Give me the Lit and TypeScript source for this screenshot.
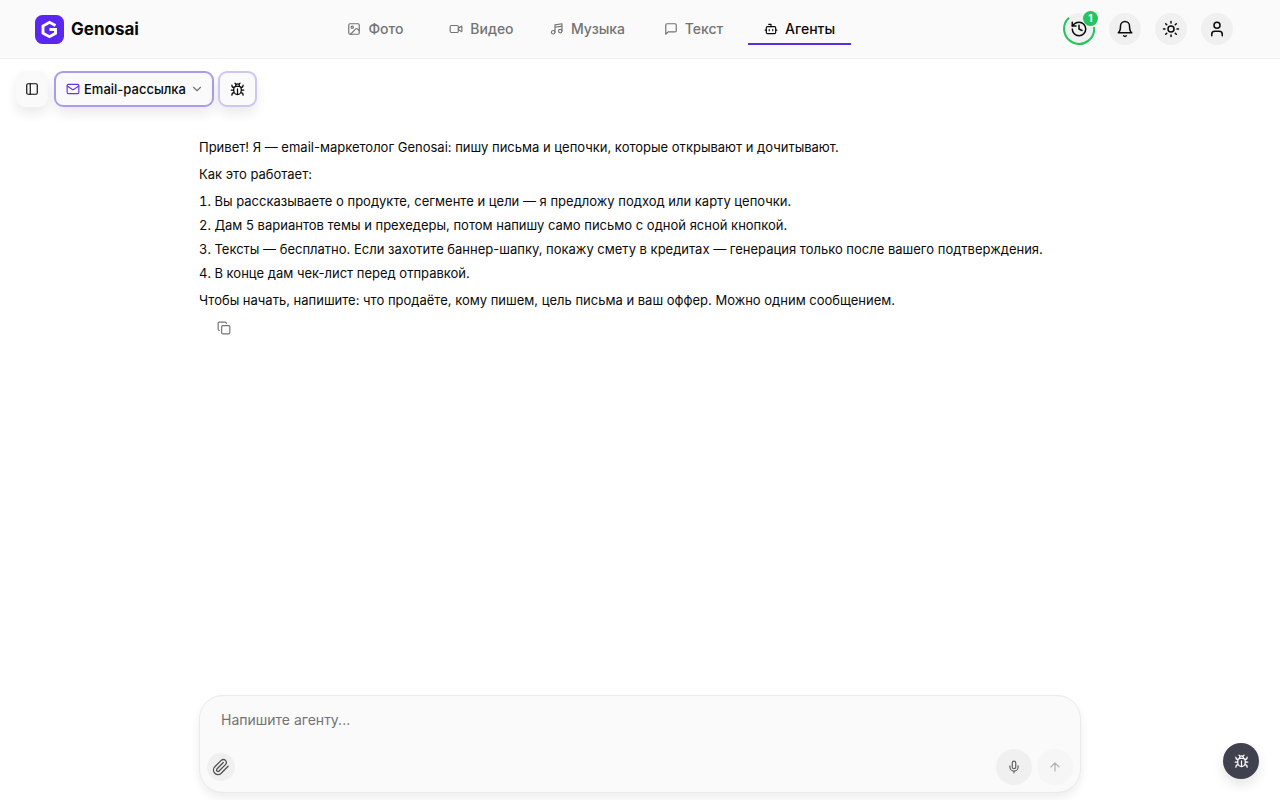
import { LitElement, html, css, svg } from "lit";
import type { TemplateResult } from "lit";
import { customElement, property, state } from "lit/decorators.js";

const glyphs: Record<string, TemplateResult> = {
  image: svg`<rect x="3" y="3" width="18" height="18" rx="2"/><circle cx="9" cy="9" r="2"/><path d="m21 15-3.086-3.086a2 2 0 0 0-2.828 0L6 21"/>`,
  video: svg`<path d="m16 13 5.223 3.482a.5.5 0 0 0 .777-.416V7.870a.5.5 0 0 0-.752-.432L16 10.500"/><rect x="2" y="6" width="14" height="12" rx="2"/>`,
  music: svg`<circle cx="5.500" cy="17.500" r="3"/><circle cx="17.500" cy="15.500" r="3"/><path d="M8.500 17.500V5l12-2v12.500M8.500 9l12-2"/>`,
  message: svg`<path d="M21 15a2 2 0 0 1-2 2H7l-4 4V5a2 2 0 0 1 2-2h14a2 2 0 0 1 2 2z"/>`,
  bot: svg`<path d="M12 8V4H8"/><rect x="4" y="8" width="16" height="12" rx="2"/><path d="M2 14h2M20 14h2M15 13v2M9 13v2"/>`,
  history: svg`<path d="M3 12a9 9 0 1 0 9-9 9.750 9.750 0 0 0-6.740 2.740L3 8"/><path d="M3 3v5h5M12 7v5l4 2"/>`,
  bell: svg`<path d="M6 8a6 6 0 0 1 12 0c0 7 3 9 3 9H3s3-2 3-9M10.300 21a1.940 1.940 0 0 0 3.400 0"/>`,
  sun: svg`<circle cx="12" cy="12" r="4"/><path d="M12 2v2M12 20v2M4.930 4.930l1.410 1.410M17.660 17.660l1.410 1.410M2 12h2M20 12h2M6.340 17.660l-1.410 1.410M19.070 4.930l-1.410 1.410"/>`,
  user: svg`<circle cx="12" cy="7" r="4"/><path d="M19 21v-2a4 4 0 0 0-4-4H9a4 4 0 0 0-4 4v2"/>`,
  panel: svg`<rect x="3" y="3" width="18" height="18" rx="2"/><path d="M9 3v18"/>`,
  mail: svg`<rect x="2" y="4" width="20" height="16" rx="2"/><path d="m22 7-8.970 5.700a1.940 1.940 0 0 1-2.060 0L2 7"/>`,
  chevron: svg`<path d="m6 9 6 6 6-6"/>`,
  bug: svg`<path d="m8 2 1.880 1.880M14.120 3.880 16 2M9 7.130v-1a3.003 3.003 0 1 1 6 0v1"/><path d="M12 20c-3.300 0-6-2.700-6-6v-3a4 4 0 0 1 4-4h4a4 4 0 0 1 4 4v3c0 3.300-2.700 6-6 6M12 20v-9M6.530 9C4.600 8.800 3 7.100 3 5M6 13H2M3 21c0-2.100 1.700-3.900 3.800-4M20.970 5c0 2.100-1.600 3.800-3.500 4M22 13h-4M17.200 17c2.100.1 3.800 1.900 3.800 4"/>`,
  copy: svg`<rect x="8" y="8" width="14" height="14" rx="2"/><path d="M4 16c-1.100 0-2-.9-2-2V4c0-1.100.9-2 2-2h10c1.100 0 2 .9 2 2"/>`,
  clip: svg`<path d="m21.440 11.050-9.190 9.190a6 6 0 0 1-8.490-8.490l8.570-8.570A4 4 0 1 1 18 8.840l-8.590 8.570a2 2 0 0 1-2.830-2.830l8.490-8.480"/>`,
  mic: svg`<path d="M12 2a3 3 0 0 0-3 3v7a3 3 0 0 0 6 0V5a3 3 0 0 0-3-3Z"/><path d="M19 10v2a7 7 0 0 1-14 0v-2M12 19v3"/>`,
  up: svg`<path d="m5 12 7-7 7 7M12 19V5"/>`,
};

@customElement("ui-icon")
export class UiIcon extends LitElement {
  @property() name = "";
  @property({ type: Number }) size = 16;
  @property({ type: Number }) stroke = 2;

  static styles = css`
    :host { display: inline-flex; flex: none; }
    svg { display: block; fill: none; stroke: currentColor; stroke-linecap: round; stroke-linejoin: round; }
  `;

  render() {
    return html`<svg width=${this.size} height=${this.size} viewBox="0 0 24 24" stroke-width=${this.stroke} aria-hidden="true">${glyphs[this.name]}</svg>`;
  }
}

const sections = [
  { label: "Фото", icon: "image" },
  { label: "Видео", icon: "video" },
  { label: "Музыка", icon: "music" },
  { label: "Текст", icon: "message" },
  { label: "Агенты", icon: "bot" },
];

const steps = [
  "Вы рассказываете о продукте, сегменте и цели — я предложу подход или карту цепочки.",
  "Дам 5 вариантов темы и прехедеры, потом напишу само письмо с одной ясной кнопкой.",
  "Тексты — бесплатно. Если захотите баннер-шапку, покажу смету в кредитах — генерация только после вашего подтверждения.",
  "В конце дам чек-лист перед отправкой.",
];

@customElement("app-root")
export class AppRoot extends LitElement {
  @state() private current = "Агенты";

  static styles = css`
    :host {
      display: flex;
      flex-direction: column;
      min-height: 100vh;
      box-sizing: border-box;
      background: #fff;
      color: #0a0a0a;
      font-family: Inter, "Liberation Sans", sans-serif;
      font-size: 14px;
      line-height: 24px;
    }
    * { box-sizing: border-box; }
    button { font: inherit; color: inherit; border: 0; padding: 0; cursor: pointer; display: inline-flex; align-items: center; justify-content: center; flex: none; }
    a { color: inherit; text-decoration: none; }
    header {
      display: grid;
      grid-template-columns: 1fr auto 1fr;
      align-items: center;
      height: 59px;
      padding: 0 47px 0 35px;
      background: #fafafa;
      border-bottom: 1px solid #f0f0f0;
    }
    .brand { display: flex; align-items: center; gap: 7px; font-size: 17px; font-weight: 700; justify-self: start; }
    .nav { display: grid; grid-template-columns: repeat(5, 1fr); gap: 3px; margin-right: 93px; }
    .tab { display: flex; align-items: center; justify-content: center; gap: 7px; height: 32px; padding: 0 14px; font-weight: 500; color: #737373; border: solid transparent; border-width: 2px 0; }
    .tab.active { color: #0a0a0a; border-bottom-color: #5b2ee5; }
    .actions { display: flex; gap: 14px; justify-self: end; }
    .round { position: relative; width: 32px; height: 32px; border-radius: 50%; background: #f0f0f0; }
    .ring { position: absolute; inset: 0; fill: none; stroke: #22c55e; stroke-width: 2; }
    .badge { position: absolute; top: -2px; right: -3px; width: 15px; height: 15px; border-radius: 50%; background: #22c55e; color: #fff; font-size: 10px; font-weight: 700; line-height: 15px; text-align: center; }
    .toolbar { display: flex; gap: 4px; padding: 12px 16px 0; }
    .tool { height: 36px; background: #fafafa; border-radius: 9px; box-shadow: 0 7px 12px rgba(0, 0, 0, 0.08); }
    .panel { width: 32px; margin-right: 2px; }
    .agent { border: 2px solid #ab9ceb; padding: 0 8px 0 10px; gap: 4px; font-size: 13px; font-weight: 500; }
    .agent .mail { color: #6335ea; }
    .agent .chevron { color: #737373; }
    .bug { width: 39px; border: 2px solid #cdc5f3; }
    .column { width: calc(100% - 32px); max-width: 882px; margin: 0 auto; }
    .chat { flex: 1; }
    .message { display: flex; flex-direction: column; gap: 3px; padding-top: 28px; font-size: 13px; }
    p, ol { margin: 0; padding: 0; }
    ol { list-style-type: none; counter-reset: step; }
    li { counter-increment: step; }
    li::before { content: counter(step) ". "; font-variant-numeric: tabular-nums; }
    .copy { width: 24px; height: 24px; margin: 1px 0 0 13px; background: none; color: #737373; }
    .composer { display: flex; flex-direction: column; height: 98px; margin-bottom: 7px; padding: 8px 7px 7px; border: 1px solid #ebebeb; border-radius: 24px; background: #fafafa; box-shadow: 0 5px 10px rgba(0, 0, 0, 0.07); }
    textarea { flex: 1; width: 100%; min-height: 0; border: 0; outline: 0; resize: none; background: none; padding: 4px 14px; font: inherit; color: inherit; }
    textarea::placeholder { color: #737373; opacity: 1; }
    .controls { display: flex; align-items: center; gap: 5px; }
    .clip { width: 28px; height: 28px; border-radius: 50%; background: #f0f0f0; color: #525252; margin-right: auto; }
    .mic, .send { width: 36px; height: 36px; border-radius: 50%; background: #f0f0f0; color: #5e5e5e; }
    .send { background: #f6f6f6; color: #b0b0b0; }
    .report { position: fixed; right: 21px; bottom: 21px; width: 36px; height: 36px; border-radius: 50%; background: #3f414e; color: #fff; box-shadow: 0 6px 12px rgba(0, 0, 0, 0.1); }
  `;

  render() {
    return html`
      <header>
        <a class="brand" href="#">
          <svg width="29" height="29" viewBox="0 0 29 29" aria-hidden="true">
            <rect width="29" height="29" rx="7.500" fill="#5b26f0"/>
            <path d="M20.500 10.600 14.500 7.300 8 11v7.200l6.500 3.500 6-3.400v-3.800h-6" fill="none" stroke="#fff" stroke-width="2.900"/>
          </svg>
          <span>Genosai</span>
        </a>
        <nav class="nav">
          ${sections.map((s) => html`
            <a class="tab ${s.label === this.current ? "active" : ""}" href="#" @click=${(e: Event) => { e.preventDefault(); this.current = s.label; }}>
              <ui-icon name=${s.icon} size="14"></ui-icon><span>${s.label}</span>
            </a>`)}
        </nav>
        <div class="actions">
          <button class="round" aria-label="История">
            <svg class="ring" width="32" height="32" viewBox="0 0 32 32"><path d="M31 14A15 15 0 1 1 6 4.800"/></svg>
            <ui-icon name="history" size="18"></ui-icon><span class="badge">1</span>
          </button>
          <button class="round" aria-label="Уведомления"><ui-icon name="bell" size="18"></ui-icon></button>
          <button class="round" aria-label="Тема"><ui-icon name="sun" size="18"></ui-icon></button>
          <button class="round" aria-label="Профиль"><ui-icon name="user" size="18"></ui-icon></button>
        </div>
      </header>
      <div class="toolbar">
        <button class="tool panel" aria-label="Панель"><ui-icon name="panel" size="14"></ui-icon></button>
        <button class="tool agent"><ui-icon class="mail" name="mail" size="14"></ui-icon><span>Email-рассылка</span><ui-icon class="chevron" name="chevron" size="14"></ui-icon></button>
        <button class="tool bug" aria-label="Отладка"><ui-icon name="bug" size="15"></ui-icon></button>
      </div>
      <main class="column chat">
        <article class="message">
          <p>Привет! Я — email-маркетолог Genosai: пишу письма и цепочки, которые открывают и дочитывают.</p>
          <p>Как это работает:</p>
          <ol>${steps.map((s) => html`<li>${s}</li>`)}</ol>
          <p>Чтобы начать, напишите: что продаёте, кому пишем, цель письма и ваш оффер. Можно одним сообщением.</p>
          <button class="copy" aria-label="Копировать"><ui-icon name="copy" size="14"></ui-icon></button>
        </article>
      </main>
      <form class="column composer" @submit=${(e: Event) => e.preventDefault()}>
        <textarea aria-label="Сообщение" placeholder="Напишите агенту..."></textarea>
        <div class="controls">
          <button class="clip" type="button" aria-label="Прикрепить"><ui-icon name="clip" size="18" stroke="1.75"></ui-icon></button>
          <button class="mic" type="button" aria-label="Голос"><ui-icon name="mic" size="14"></ui-icon></button>
          <button class="send" type="submit" aria-label="Отправить"><ui-icon name="up" size="14"></ui-icon></button>
        </div>
      </form>
      <button class="report" aria-label="Сообщить об ошибке"><ui-icon name="bug" size="15"></ui-icon></button>
    `;
  }
}
